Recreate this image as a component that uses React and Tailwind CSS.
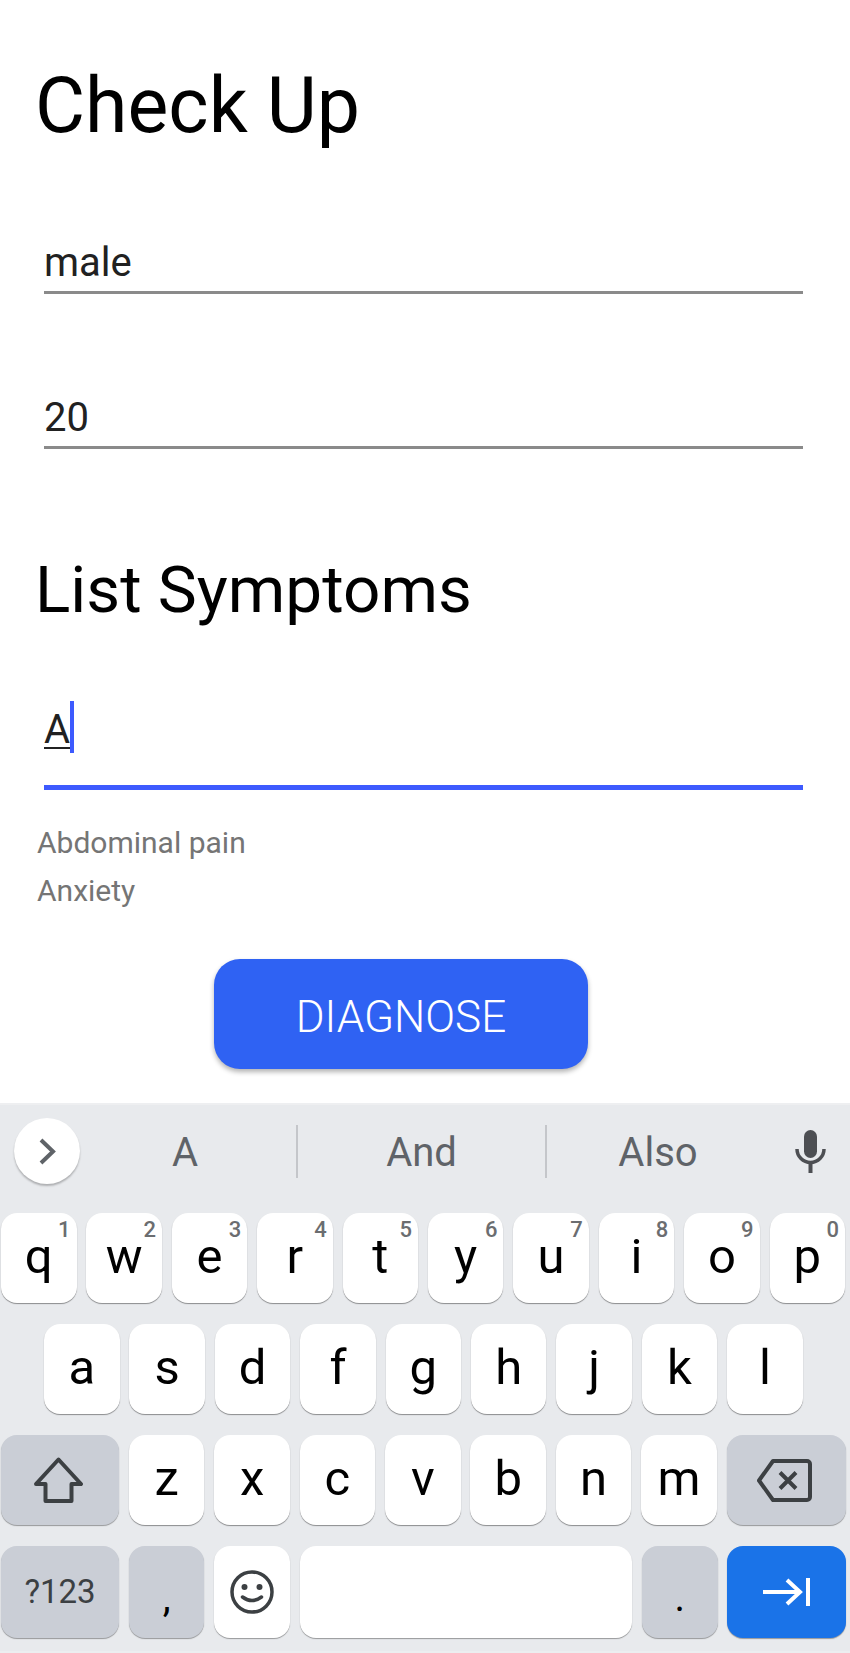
const rowOne = [
  ["q", "1"], ["w", "2"], ["e", "3"], ["r", "4"], ["t", "5"],
  ["y", "6"], ["u", "7"], ["i", "8"], ["o", "9"], ["p", "0"],
];
const rowTwo = ["a", "s", "d", "f", "g", "h", "j", "k", "l"];
const rowThree = ["z", "x", "c", "v", "b", "n", "m"];

function Key({ children, hint }) {
  return (
    <div className="relative flex h-[90px] w-[75.5px] items-start justify-center rounded-[16px] bg-white pt-[24px] text-[49px] leading-[40px] text-black shadow-[0_1px_1px_rgba(0,0,0,0.4)]">
      {children}
      {hint && (
        <span className="absolute top-[5px] right-[6px] text-[22px] leading-[24px] font-medium text-[#6b6d70]">
          {hint}
        </span>
      )}
    </div>
  );
}

function ActionKey({ children, className }) {
  return (
    <div className={"flex items-center justify-center rounded-[16px] shadow-[0_1px_1px_rgba(0,0,0,0.35)] " + className}>
      {children}
    </div>
  );
}

function Suggestion({ children, className }) {
  return (
    <div className={"flex h-[53px] items-center justify-center pt-[2px] text-[40px] leading-[53px] text-[#5f6368] " + className}>
      {children}
    </div>
  );
}

export default function App() {
  return (
    <div className="flex h-[1653px] w-[850px] flex-col overflow-hidden bg-white font-['Roboto',sans-serif]">
      <div className="h-[1103px] shrink-0">
        <h1 className="ml-[35px] pt-[61px] text-[77px] leading-[90px] text-black">Check Up</h1>

        <div className="mt-[90px] mr-[47px] ml-[44px] h-[53px] border-b-[3px] border-[#8a8a8a] text-[40px] leading-[44px] text-[#212121]">
          male
        </div>
        <div className="mt-[102px] mr-[47px] ml-[44px] h-[53px] border-b-[3px] border-[#8a8a8a] text-[40px] leading-[44px] text-[#212121]">
          20
        </div>

        <h2 className="mt-[101px] ml-[35px] text-[65.6px] leading-[80px] text-black">List Symptoms</h2>

        <div className="mt-[61px] mr-[47px] ml-[44px] flex h-[99px] items-start border-b-[5px] border-[#3d5afe] pt-[10px]">
          <span className="mt-[7px] h-[44px] text-[40px] leading-[44px] text-[#212121] underline decoration-[2px] underline-offset-[4px]">
            A
          </span>
          <span className="h-[52px] w-[4px] bg-[#3d5afe]" />
        </div>

        <div className="mt-[29px] ml-[37px] text-[30px] leading-[48px] text-[#757575]">
          <div>Abdominal pain</div>
          <div>Anxiety</div>
        </div>

        <button className="mt-[44px] ml-[214px] block h-[110px] w-[374px] rounded-[26px] bg-[#2f62f3] pt-[6px] text-[44px] font-light text-white shadow-[0_3px_5px_rgba(0,0,0,0.3)]">
          DIAGNOSE
        </button>
      </div>

      <div className="flex flex-1 flex-col border-t-[2px] border-[#eeeff1] bg-[#e8eaed]">
        <div className="flex h-[108px] shrink-0 items-center pb-[16px]">
          <div className="ml-[14px] flex h-[66px] w-[66px] items-center justify-center rounded-full bg-white shadow-[0_2px_2px_rgba(0,0,0,0.25)]">
            <svg width="17" height="27" viewBox="0 0 17 27" fill="none" stroke="#5f6368" strokeWidth="4">
              <path d="M2 2 L14 13.5 L2 25" />
            </svg>
          </div>
          <Suggestion className="w-[216px] pr-[6px]">A</Suggestion>
          <Suggestion className="w-[251px] border-x-[2px] border-[#c4c6ca]">And</Suggestion>
          <Suggestion className="w-[222px]">Also</Suggestion>
          <svg className="ml-[26px]" width="31" height="43" viewBox="0 0 31 43" fill="none">
            <rect x="9" y="0" width="13" height="28" rx="6.5" fill="#4d4f53" />
            <path d="M2 19 a13.5 13.5 0 0 0 27 0" stroke="#4d4f53" strokeWidth="3.5" />
            <path d="M15.5 32 V43" stroke="#4d4f53" strokeWidth="4" />
          </svg>
        </div>

        <div className="flex flex-col gap-[21px]">
          <div className="flex gap-[9.9px] pl-[1px]">
            {rowOne.map(([letter, hint]) => (
              <Key key={letter} hint={hint}>{letter}</Key>
            ))}
          </div>

          <div className="flex gap-[9.9px] pl-[44px]">
            {rowTwo.map((letter) => (
              <Key key={letter}>{letter}</Key>
            ))}
          </div>

          <div className="flex gap-[9.9px] pl-[1px]">
            <ActionKey className="h-[90px] w-[118px] bg-[#caced6] pr-[3px]">
              <svg width="49" height="46" viewBox="0 0 49 46" fill="none" stroke="#3c4043" strokeWidth="4" strokeLinejoin="round">
                <path d="M24.5 2.5 L47 27 H37.5 V44 H11.5 V27 H2 Z" />
              </svg>
            </ActionKey>
            {rowThree.map((letter) => (
              <Key key={letter}>{letter}</Key>
            ))}
            <ActionKey className="h-[90px] w-[119px] bg-[#caced6] pr-[3px]">
              <svg width="55" height="43" viewBox="0 0 55 43" fill="none" stroke="#3c4043" strokeWidth="4" strokeLinejoin="round">
                <path d="M16 2 H50 a3 3 0 0 1 3 3 V38 a3 3 0 0 1 -3 3 H16 L2 21.5 Z" />
                <path d="M23 13.5 L39 29.5 M39 13.5 L23 29.5" />
              </svg>
            </ActionKey>
          </div>

          <div className="flex gap-[9.9px] pl-[1px]">
            <ActionKey className="h-[92px] w-[118px] bg-[#caced6] text-[33px] text-[#3c4043]">?123</ActionKey>
            <ActionKey className="h-[92px] w-[75.5px] bg-[#caced6] pt-[12px] text-[40px] leading-[80px] text-black">,</ActionKey>
            <ActionKey className="h-[92px] w-[75.5px] bg-white">
              <svg width="44" height="44" viewBox="0 0 44 44" fill="none" stroke="#3c4043" strokeWidth="3.5">
                <circle cx="22" cy="22" r="20" />
                <circle cx="14.5" cy="17" r="3" fill="#3c4043" stroke="none" />
                <circle cx="29.5" cy="17" r="3" fill="#3c4043" stroke="none" />
                <path d="M12.5 27 Q22 34 31.5 27" strokeLinecap="round" />
              </svg>
            </ActionKey>
            <ActionKey className="h-[92px] w-[332.5px] bg-white" />
            <ActionKey className="h-[92px] w-[75.5px] bg-[#caced6] pt-[12px] text-[40px] leading-[80px] text-black">.</ActionKey>
            <ActionKey className="h-[92px] w-[119px] bg-[#1a73e8]">
              <svg width="47" height="28" viewBox="0 0 47 28" fill="none" stroke="#fff" strokeWidth="4">
                <path d="M0 14 H38 M24 2 L37 14 L24 26 M45 0 V28" />
              </svg>
            </ActionKey>
          </div>
        </div>

        <div className="mt-auto h-[2px] bg-[#eceef0]" />
      </div>
    </div>
  );
}
